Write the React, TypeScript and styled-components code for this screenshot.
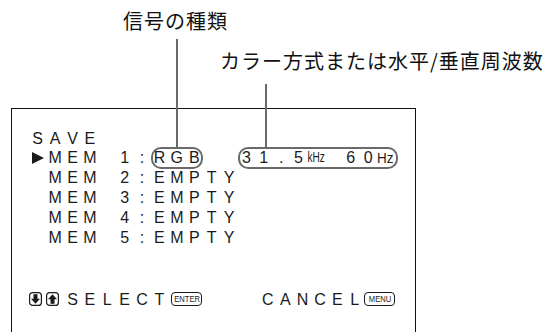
import React from 'react';
import styled, { createGlobalStyle } from 'styled-components';

const CELL = 17.4;
const ROW = 19.8;
const INK = '#1b1b1b';
const LEAD = '#6a6a6a';

const GlobalStyle = createGlobalStyle`
  html, body {
    margin: 0;
    padding: 0;
    background: #fff;
    overflow: hidden;
  }
  body {
    font-family: 'Liberation Sans', Arial, sans-serif;
    color: ${INK};
  }
`;

const Page = styled.div`
  width: 552px;
  height: 332px;
  display: flex;
  flex-direction: column;
  overflow: hidden;
`;

const Caption = styled.div<{ $left: number; $top: number }>`
  margin-left: ${(p) => p.$left}px;
  margin-top: ${(p) => p.$top}px;
  font-family: 'Noto Sans CJK JP', sans-serif;
  font-size: 20px;
  line-height: 24px;
  letter-spacing: 1px;
  color: #111;
  white-space: nowrap;
`;

const Screen = styled.div`
  margin: 35px 0 0 11px;
  width: 405px;
  height: 240px;
  flex: none;
  box-sizing: border-box;
  border: 1.5px solid #111;
  border-bottom: none;
  padding: 19.6px 0 0 17px;
  display: flex;
  flex-direction: column;
  font-size: 16px;
`;

const Row = styled.div<{ $gap?: number }>`
  display: flex;
  align-items: center;
  height: ${ROW}px;
  margin-top: ${(p) => p.$gap ?? 0}px;
`;

const Cell = styled.span<{ $align?: string }>`
  flex: none;
  width: ${CELL}px;
  line-height: ${ROW}px;
  display: flex;
  align-items: center;
  justify-content: ${(p) => p.$align ?? 'center'};
  white-space: pre;
`;

const Pointer = styled.span`
  width: 0;
  height: 0;
  border-top: 6px solid transparent;
  border-bottom: 6px solid transparent;
  border-left: 12px solid ${INK};
`;

const Pill = styled.span<{ $lead: number; $leadHeight: number; $extend?: number }>`
  position: relative;
  display: flex;
  align-self: stretch;
  align-items: center;

  &::after {
    content: '';
    position: absolute;
    top: -1px;
    bottom: -1px;
    left: 0;
    right: ${(p) => -(p.$extend ?? 0)}px;
    border: 2px solid ${LEAD};
    border-radius: 10px;
  }

  &::before {
    content: '';
    position: absolute;
    left: ${(p) => p.$lead}px;
    bottom: calc(100% + 1px);
    width: 2px;
    height: ${(p) => p.$leadHeight}px;
    background: ${LEAD};
  }
`;

const Unit = styled.span<{ $squeeze: number; $size: number }>`
  display: inline-block;
  font-size: ${(p) => p.$size}px;
  transform: scaleX(${(p) => p.$squeeze});
  white-space: nowrap;
`;

const Keycap = styled.span<{ $gap: number }>`
  flex: none;
  margin-left: ${(p) => p.$gap}px;
  width: 31px;
  height: 14px;
  box-sizing: border-box;
  border: 1.2px solid ${INK};
  border-radius: 4px;
  display: flex;
  align-items: center;
  justify-content: center;
  overflow: hidden;
`;

const KeyText = styled.span`
  display: inline-block;
  font-size: 9.5px;
  line-height: 10px;
  transform: scaleX(0.8);
  white-space: nowrap;
`;

const Group = styled.span<{ $gap: number }>`
  display: flex;
  margin-left: ${(p) => p.$gap}px;
`;

const Chars = ({ text }: { text: string }) => (
  <>
    {[...text].map((c, i) => (
      <Cell key={i}>{c}</Cell>
    ))}
  </>
);

const ArrowKey = ({ up }: { up?: boolean }) => (
  <svg width="13" height="14" viewBox="0 0 13 14">
    <rect x="0.6" y="0.6" width="11.8" height="12.8" rx="3" fill="none" stroke={INK} strokeWidth="1.2" />
    <g transform={up ? 'rotate(180 6.5 7)' : undefined}>
      <rect x="4.5" y="2.2" width="4" height="5" fill={INK} />
      <polygon points="2,6.8 11,6.8 6.5,11.8" fill={INK} />
    </g>
  </svg>
);

const slots = [2, 3, 4, 5];

export default function App() {
  return (
    <Page>
      <GlobalStyle />
      <Caption $left={123} $top={9}>信号の種類</Caption>
      <Caption $left={220} $top={16}>カラー方式または水平/垂直周波数</Caption>
      <Screen>
        <Row>
          <Chars text="SAVE" />
        </Row>
        <Row>
          <Cell>
            <Pointer />
          </Cell>
          <Chars text="MEM 1:" />
          <Pill $lead={25} $leadHeight={108}>
            <Chars text="RGB" />
          </Pill>
          <Chars text="  " />
          <Pill $lead={27} $leadHeight={63} $extend={4}>
            <Chars text="31.5" />
            <Cell>
              <Unit $size={14} $squeeze={0.72}>kHz</Unit>
            </Cell>
            <Chars text=" 60" />
            <Cell>
              <Unit $size={15} $squeeze={0.9}>Hz</Unit>
            </Cell>
          </Pill>
        </Row>
        {slots.map((n) => (
          <Row key={n}>
            <Cell />
            <Chars text={`MEM ${n}:EMPTY`} />
          </Row>
        ))}
        <Row $gap={42.2}>
          <Cell $align="flex-start">
            <ArrowKey />
          </Cell>
          <Cell $align="flex-start">
            <ArrowKey up />
          </Cell>
          <Chars text="SELECT" />
          <Keycap $gap={3}>
            <KeyText>ENTER</KeyText>
          </Keycap>
          <Group $gap={57}>
            <Chars text="CANCEL" />
          </Group>
          <Keycap $gap={1}>
            <KeyText>MENU</KeyText>
          </Keycap>
        </Row>
      </Screen>
    </Page>
  );
}
